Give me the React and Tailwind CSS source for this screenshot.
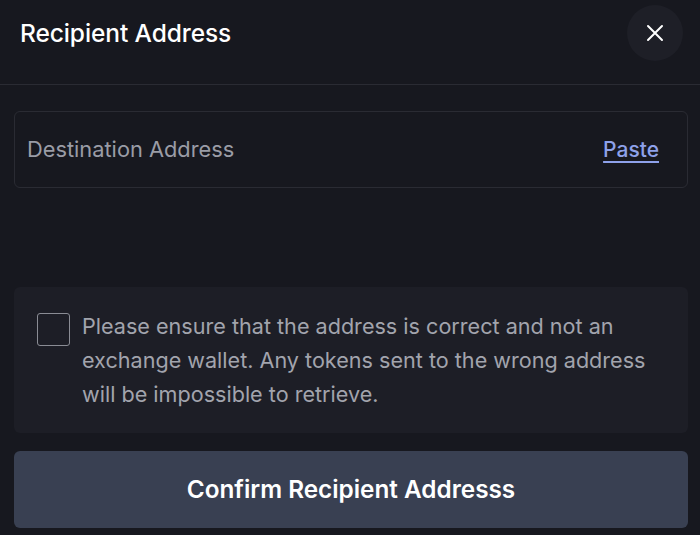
export default function App() {
  return (
    <div className="w-[700px] h-[535px] bg-[#17181f] overflow-hidden" style={{ fontFamily: 'Inter, "Open Sans", sans-serif' }}>
      <div className="h-[85px] flex items-start justify-between pl-[20px] pr-[17px] pt-[5px] border-b border-[#2a2b33]">
        <div className="h-[56px] flex items-center">
          <h1 className="text-[24.5px] font-medium text-white tracking-[-0.1px]">Recipient Address</h1>
        </div>
        <button className="w-[56px] h-[56px] rounded-full bg-[#1e1f27] flex items-center justify-center">
          <svg width="18" height="18" viewBox="0 0 18 18" fill="none" stroke="white" strokeWidth="2" strokeLinecap="round">
            <path d="M2 2L16 16M16 2L2 16" />
          </svg>
        </button>
      </div>
      <div className="pl-[14px] pr-[12px] pt-[26px] flex flex-col">
        <div className="h-[77px] rounded-[6px] border border-[#2a2b33] flex items-center justify-between pl-[12px] pr-[28px]">
          <span className="text-[21.8px] text-[#9a9ca6]">Destination Address</span>
          <span className="text-[21px] font-medium text-[#8ea1ea] underline underline-offset-[4px]">Paste</span>
        </div>
        <div className="mt-[99px] h-[146px] rounded-[6px] bg-[#1d1e26] flex items-start pl-[23px] pr-[20px] pt-[26px] gap-[12px]">
          <div className="w-[33px] h-[33px] shrink-0 rounded-[3px] border-[1.5px] border-[#8a8c94]"></div>
          <p className="text-[21.6px] leading-[34px] text-[#a2a4ad] -mt-[4px]">
            Please ensure that the address is correct and not an exchange wallet. Any tokens sent to the wrong address will be impossible to retrieve.
          </p>
        </div>
        <button className="mt-[18px] h-[77px] rounded-[6px] bg-[#394052] flex items-center justify-center text-[24.3px] font-semibold text-white">
          Confirm Recipient Addresss
        </button>
      </div>
    </div>
  );
}
